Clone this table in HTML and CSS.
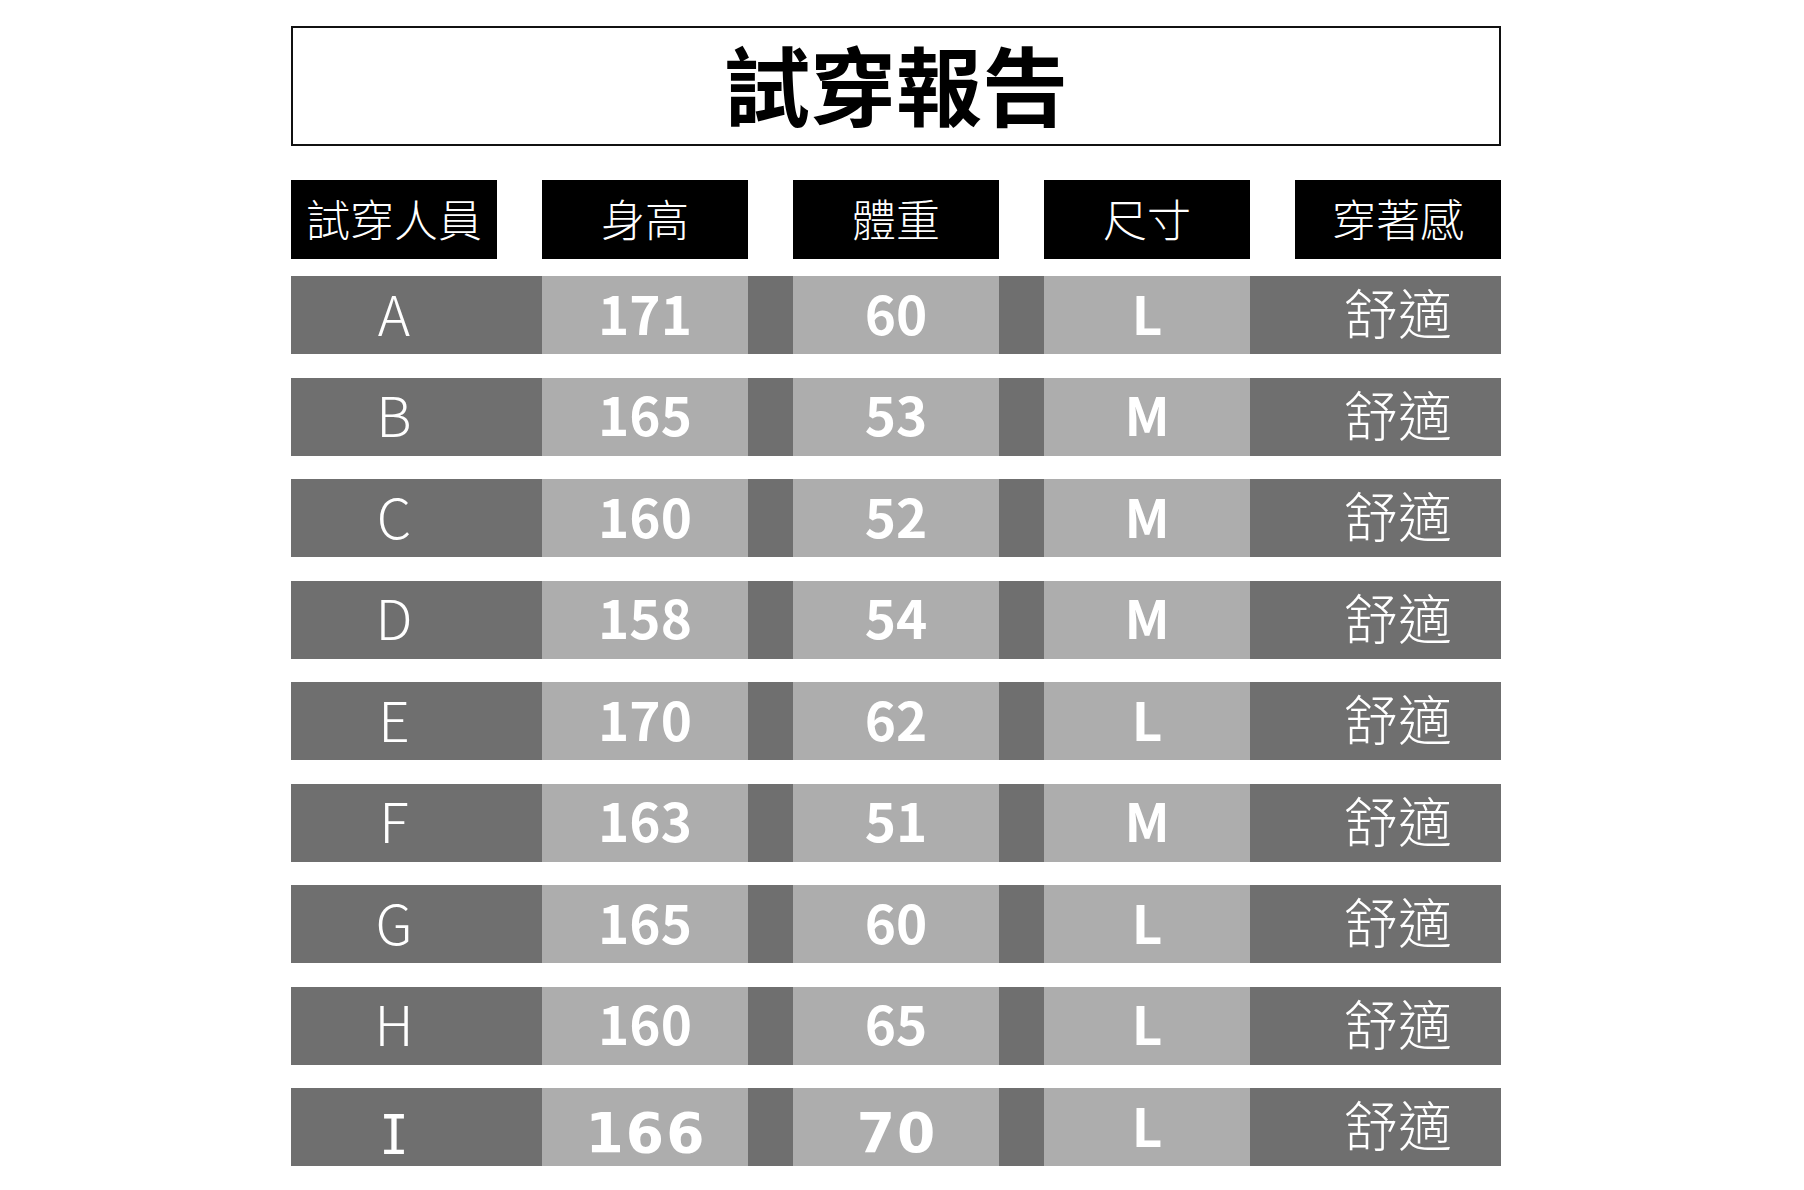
FILE: index.html
```html
<!DOCTYPE html>
<html lang="zh-Hant">
<head>
<meta charset="utf-8">
<title>試穿報告</title>
<link rel="stylesheet" href="styles.css">
</head>
<body>
<main class="report">
  <h1 class="title">試穿報告</h1>
  <div class="head">
    <div class="hcell">試穿人員</div>
    <div class="hcell">身高</div>
    <div class="hcell">體重</div>
    <div class="hcell">尺寸</div>
    <div class="hcell">穿著感</div>
  </div>
  <div class="rows">
    <div class="row"><div class="c name">A</div><div class="c num">171</div><div class="c num">60</div><div class="c num">L</div><div class="c feel">舒適</div></div>
    <div class="row"><div class="c name">B</div><div class="c num">165</div><div class="c num">53</div><div class="c num">M</div><div class="c feel">舒適</div></div>
    <div class="row"><div class="c name">C</div><div class="c num">160</div><div class="c num">52</div><div class="c num">M</div><div class="c feel">舒適</div></div>
    <div class="row"><div class="c name">D</div><div class="c num">158</div><div class="c num">54</div><div class="c num">M</div><div class="c feel">舒適</div></div>
    <div class="row"><div class="c name">E</div><div class="c num">170</div><div class="c num">62</div><div class="c num">L</div><div class="c feel">舒適</div></div>
    <div class="row"><div class="c name">F</div><div class="c num">163</div><div class="c num">51</div><div class="c num">M</div><div class="c feel">舒適</div></div>
    <div class="row"><div class="c name">G</div><div class="c num">165</div><div class="c num">60</div><div class="c num">L</div><div class="c feel">舒適</div></div>
    <div class="row"><div class="c name">H</div><div class="c num">160</div><div class="c num">65</div><div class="c num">L</div><div class="c feel">舒適</div></div>
    <div class="row"><div class="c name mono">I</div><div class="c num wide">166</div><div class="c num wide">70</div><div class="c num">L</div><div class="c feel">舒適</div></div>
  </div>
</main>
</body>
</html>
```
FILE: styles.css
```css
html, body {
  margin: 0;
  padding: 0;
  background: #ffffff;
}
body {
  font-family: "Noto Sans CJK TC", "Noto Sans CJK SC", sans-serif;
}
.report {
  width: 1210px;
  margin-left: 291px;
  padding-top: 26px;
}
.title {
  box-sizing: border-box;
  height: 120px;
  margin: 0;
  padding-bottom: 6px;
  border: 2px solid #111;
  display: flex;
  align-items: center;
  justify-content: center;
  font-size: 86px;
  font-weight: 700;
  color: #000;
  line-height: 1;
}
.head {
  margin-top: 34px;
  display: grid;
  grid-template-columns: repeat(5, 206px);
  column-gap: 45px;
}
.hcell {
  box-sizing: border-box;
  height: 79px;
  padding-bottom: 3px;
  background: #000;
  color: #fff;
  display: flex;
  align-items: center;
  justify-content: center;
  font-size: 44px;
  font-weight: 300;
  line-height: 1;
}
.rows {
  margin-top: 17px;
  display: flex;
  flex-direction: column;
  gap: 23.5px;
}
.row {
  height: 78px;
  background: #6f6f6f;
  display: grid;
  grid-template-columns: repeat(5, 206px);
  column-gap: 45px;
}
.c {
  display: flex;
  align-items: center;
  justify-content: center;
  color: #fff;
  line-height: 1;
  padding-bottom: 6px;
  box-sizing: border-box;
}
.name {
  font-size: 55px;
  font-weight: 300;
}
.num {
  background: #adadad;
  font-size: 53px;
  font-weight: 700;
}
.feel {
  font-size: 54px;
  font-weight: 300;
}
.name.mono {
  font-family: "Noto Sans Mono CJK TC", "Noto Sans Mono CJK SC", monospace;
  font-size: 55px;
  font-weight: 300;
  padding-bottom: 0;
  padding-top: 6px;
}
.num.wide {
  font-family: "DejaVu Sans", sans-serif;
  font-size: 55px;
  font-weight: 700;
  letter-spacing: 2px;
  padding-left: 2px;
  padding-bottom: 0;
  padding-top: 12px;
}
```
